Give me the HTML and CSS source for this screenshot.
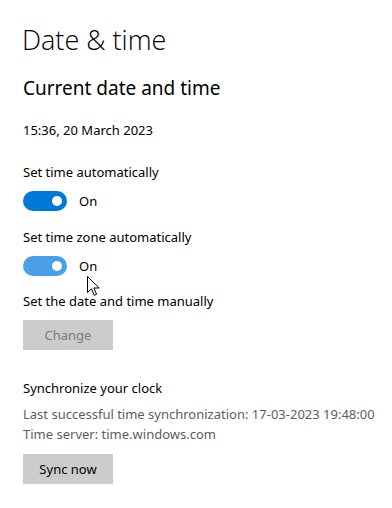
FILE: index.html
```html
<!DOCTYPE html>
<html>
<head>
<meta charset="utf-8">
<link rel="stylesheet" href="styles.css">
</head>
<body>
<main class="page">
  <h1 class="title">Date &amp; time</h1>
  <h2 class="subtitle">Current date and time</h2>
  <p class="now">15:36, 20 March 2023</p>

  <div class="setting">
    <p class="label">Set time automatically</p>
    <div class="toggle-row">
      <span class="toggle"><span class="knob"></span></span>
      <span class="state">On</span>
    </div>
  </div>

  <div class="setting">
    <p class="label">Set time zone automatically</p>
    <div class="toggle-row">
      <span class="toggle hover"><span class="knob"></span></span>
      <span class="state">On</span>
      <svg class="cursor" width="14" height="21" viewBox="0 0 14 21">
        <path d="M0.5 0.5 L0.5 16.5 L4.5 12.8 L7.3 19.3 L9.6 18.3 L6.9 12 L12.2 12 Z" fill="#fff" stroke="#000" stroke-width="1" stroke-linejoin="miter"/>
      </svg>
    </div>
  </div>

  <div class="setting manual">
    <p class="label">Set the date and time manually</p>
    <button class="btn disabled">Change</button>
  </div>

  <section class="sync">
    <p class="label">Synchronize your clock</p>
    <p class="info">Last successful time synchronization: 17-03-2023 19:48:00</p>
    <p class="info">Time server: time.windows.com</p>
    <button class="btn">Sync now</button>
  </section>
</main>
</body>
</html>
```

FILE: styles.css
```css
* { box-sizing: border-box; }
html, body { margin: 0; padding: 0; background: #fff; }
body {
  font-family: "Noto Sans", "Open Sans", "Liberation Sans", sans-serif;
  color: #000;
  width: 392px;
  height: 508px;
  overflow: hidden;
}
.page {
  padding: 22px 0 0 23px;
  display: flex;
  flex-direction: column;
}
p, h1, h2 { margin: 0; font-weight: 400; }
.title {
  font-family: "Open Sans", "Noto Sans", sans-serif;
  font-weight: 300;
  font-size: 27px;
  line-height: 36px;
  margin-left: -1px;
}
.subtitle {
  font-size: 19px;
  line-height: 26px;
  margin-top: 17px;
}
.now {
  font-size: 13px;
  line-height: 18px;
  margin-top: 20px;
}
.setting { margin-top: 24px; display: flex; flex-direction: column; }
.setting + .setting { margin-top: 17px; }
.setting.manual { margin-top: 16px; }
.label { font-size: 13px; line-height: 18px; }
.toggle-row {
  margin-top: 10px;
  display: flex;
  align-items: center;
  gap: 12px;
  position: relative;
  height: 20px;
}
.toggle {
  width: 44px;
  height: 20px;
  border-radius: 10px;
  background: #0078d7;
  position: relative;
  display: inline-block;
}
.toggle.hover { background: #4aa0e6; }
.knob {
  position: absolute;
  right: 5px;
  top: 5px;
  width: 10px;
  height: 10px;
  border-radius: 50%;
  background: #fff;
}
.state { font-size: 13px; line-height: 18px; }
.cursor {
  position: absolute;
  left: 64px;
  top: 20px;
}
.btn {
  margin-top: 10px;
  width: 90px;
  height: 30px;
  border: 0;
  background: #cccccc;
  font-family: inherit;
  font-size: 13px;
  color: #000;
  padding: 0;
}
.btn.disabled { color: #7a7a7a; }
.sync { margin-top: 29px; display: flex; flex-direction: column; }
.sync .info { font-size: 13px; line-height: 20px; color: #5d5d5d; }
.sync .label + .info { margin-top: 7px; }
.sync .btn { margin-top: 10px; }
```
